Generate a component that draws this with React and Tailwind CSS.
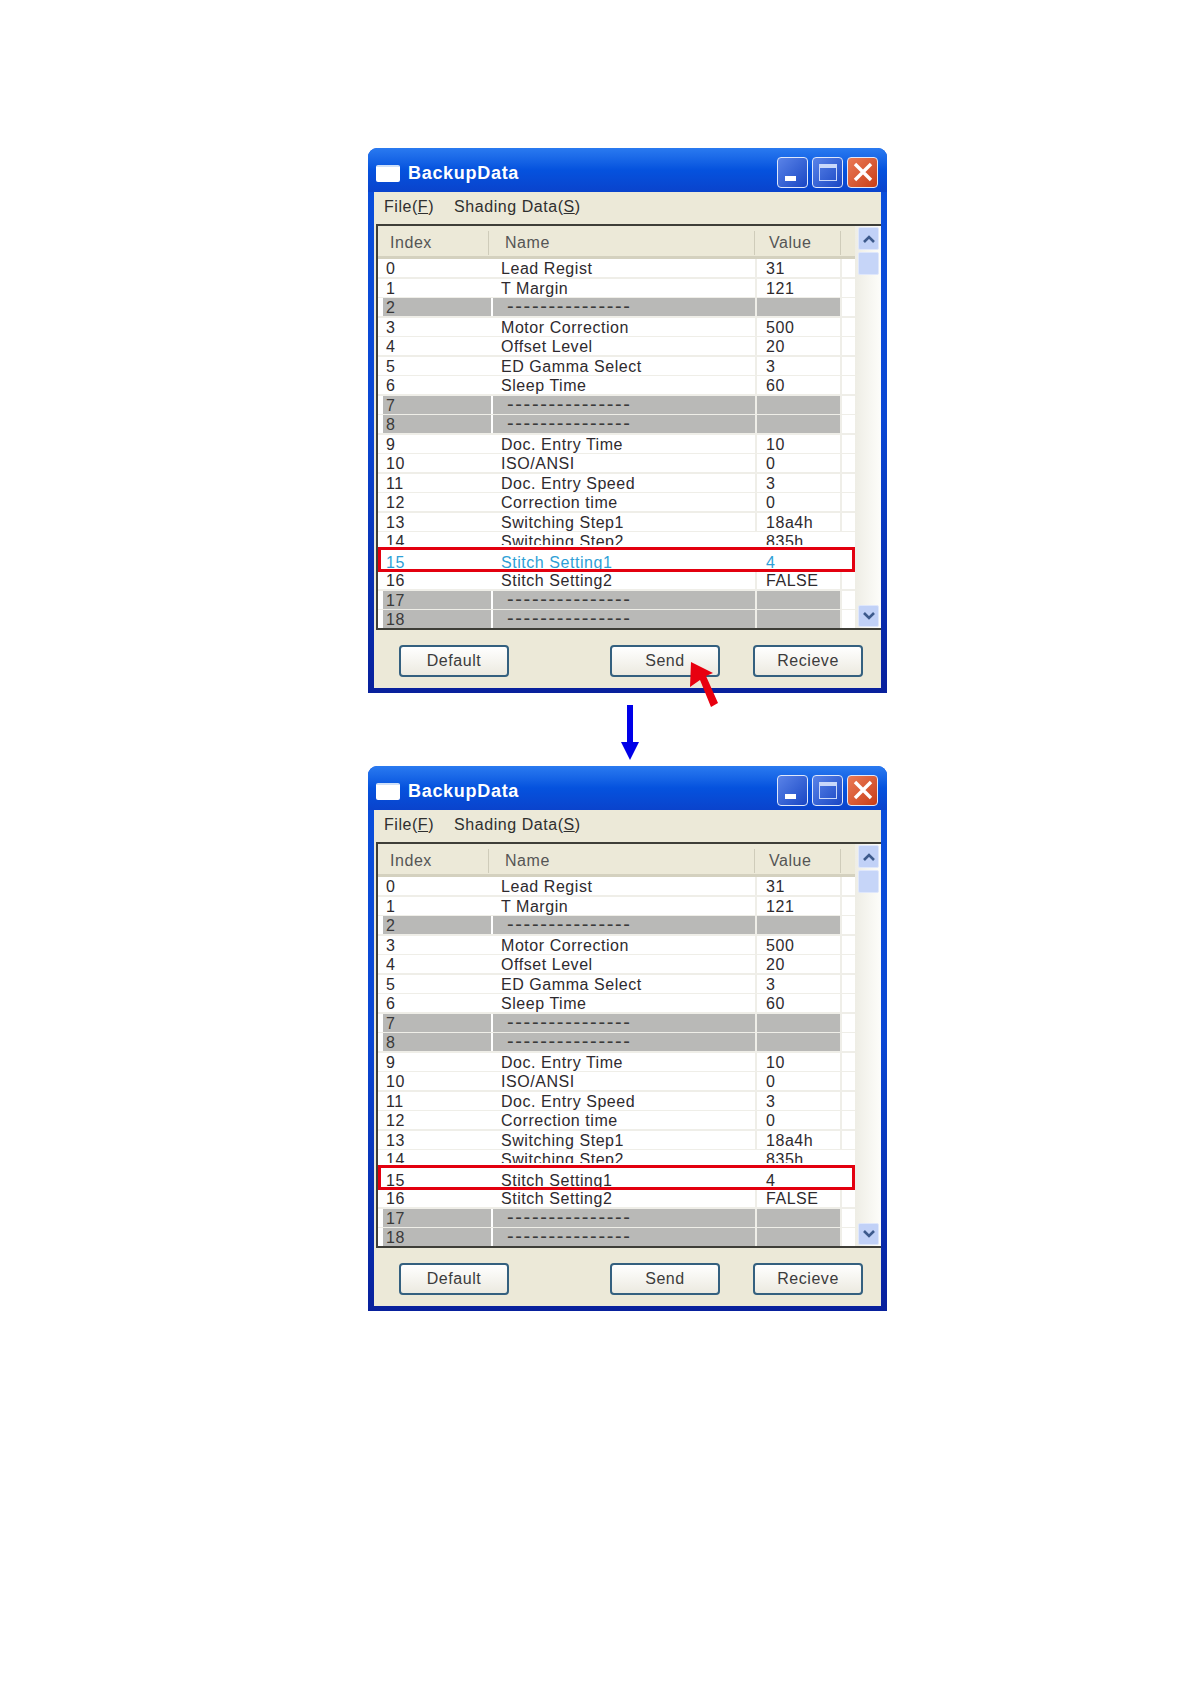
import React from 'react';

const rows = [
  ['0', 'Lead Regist', '31'],
  ['1', 'T Margin', '121'],
  ['2'],
  ['3', 'Motor Correction', '500'],
  ['4', 'Offset Level', '20'],
  ['5', 'ED Gamma Select', '3'],
  ['6', 'Sleep Time', '60'],
  ['7'],
  ['8'],
  ['9', 'Doc. Entry Time', '10'],
  ['10', 'ISO/ANSI', '0'],
  ['11', 'Doc. Entry Speed', '3'],
  ['12', 'Correction time', '0'],
  ['13', 'Switching Step1', '18a4h'],
  ['14', 'Switching Step2', '835h'],
  ['15', 'Stitch Setting1', '4'],
  ['16', 'Stitch Setting2', 'FALSE'],
  ['17'],
  ['18'],
];

const Row = ({ row, highlight }) => {
  const [index, name, value] = row;
  const blank = name === undefined;
  const cell = blank ? 'bg-[#b9b9b7]' : 'bg-white';
  const n = Number(index);
  // row 14 is cut off by row 15 in the original capture
  const height = n === 14 ? 'h-[15px] items-start' : n === 15 ? 'h-[24px] items-end' : 'h-[19.5px] items-stretch';
  const cellHeight = n === 14 ? 'h-[13px] overflow-hidden' : 'h-[18px]';
  const color = highlight ? 'text-[#2f9fd6]' : blank ? 'text-[#3a3a3a]' : 'text-[#2e2a2e]';

  return (
    <div className={`relative flex ${n === 14 || n === 15 ? 'bg-white' : 'bg-[#efeee8]'} ${height} ${color}`}>
      <div className={`flex w-[115px] shrink-0 bg-white leading-[20px] ${cellHeight}`}>
        <div className={`ml-[5px] h-[18px] w-[108px] pl-[3px] ${cell}`}>{index}</div>
      </div>
      <div className={`w-[262px] shrink-0 leading-[20px] pl-[8px] ${cellHeight} ${cell}`}>
        {blank ? <span className="ml-[6px] text-[20px] leading-[16px] tracking-[1.65px]">---------------</span> : name}
      </div>
      <div className={`ml-[2px] w-[83px] shrink-0 leading-[20px] pl-[9px] ${cellHeight} ${cell}`}>{value}</div>
      <div className={`ml-[2px] w-[13px] shrink-0 bg-white ${cellHeight}`} />
    </div>
  );
};

const Chevron = ({ up }) => (
  <svg viewBox="0 0 14 10" className="h-[10px] w-[14px]">
    <path d={up ? 'M2 8 L7 3 L12 8' : 'M2 2 L7 7 L12 2'} fill="none" stroke="#3d5a8c" strokeWidth="2.6" />
  </svg>
);

const CapButton = ({ children, close }) => (
  <div
    className={`flex h-[31px] w-[31px] items-center justify-center rounded-[4px] border border-[#dfe8fb] ${
      close ? 'bg-gradient-to-br from-[#ea7a55] to-[#c93c12]' : 'bg-gradient-to-br from-[#5a83e8] to-[#1a46c4]'
    }`}
  >
    {children}
  </div>
);

const PushButton = ({ children, className }) => (
  <div
    className={`flex h-[32px] w-[110px] items-center justify-center rounded-[4px] border-2 border-[#34607f] bg-gradient-to-b from-white to-[#eceae0] text-[16px] text-[#3c3c3c] ${className}`}
  >
    {children}
  </div>
);

const BackupWindow = ({ activeRow, children }) => (
  <div className="relative flex h-[545px] w-[519px] flex-col rounded-t-[9px] bg-gradient-to-b from-[#0a4fdc] via-[#0a47d4] to-[#08209c] pl-[6px] pr-[6px] pb-[5px] font-['Liberation_Sans',sans-serif] tracking-[0.55px] text-[16px]">
    {/* Title bar */}
    <div className="-ml-[6px] -mr-[6px] flex h-[44px] shrink-0 items-center rounded-t-[9px] bg-gradient-to-b from-[#2a7af0] via-[#0552de] to-[#0a43cc] pl-[8px] pr-[9px] pt-[6px]">
      <div className="h-[17px] w-[24px] rounded-[2px] border-t-2 border-[#cfe0f8] bg-white" />
      <span className="ml-[8px] text-[18px] font-bold tracking-[0.7px] text-white">BackupData</span>
      <div className="ml-auto -mt-[2px] flex gap-[4px]">
        <CapButton>
          <div className="mt-[13px] mr-[5px] h-[5px] w-[11px] bg-white" />
        </CapButton>
        <CapButton>
          <div className="h-[17px] w-[18px] border-[1.5px] border-t-[4px] border-[#c9d8fa]" />
        </CapButton>
        <CapButton close>
          <svg viewBox="0 0 20 20" className="h-[20px] w-[20px]">
            <path d="M2 2 L18 18 M18 2 L2 18" stroke="#fff" strokeWidth="3.4" />
          </svg>
        </CapButton>
      </div>
    </div>

    <div className="flex min-h-0 flex-1 flex-col bg-[#ece9d8]">
      {/* Menu */}
      <div className="flex h-[32px] shrink-0 items-center gap-[20px] pb-[2px] pl-[10px] text-[#2f2f2f]">
        <span>File(<span className="underline">F</span>)</span>
        <span>Shading Data(<span className="underline">S</span>)</span>
      </div>

      {/* Table */}
      <div className="ml-[2px] flex h-[406px] shrink-0 border-y-2 border-l-2 border-y-[#3e3e38] border-l-[#3e3e38] bg-white">
        <div className="w-[477px] shrink-0">
          <div className="flex h-[33px] items-center border-b-[3px] border-[#d4d1bf] bg-[#ece9d8] pt-[4px] text-[#555]">
            <div className="w-[110px] pl-[12px]">Index</div>
            <div className="h-[24px] w-px bg-[#cfccba]" />
            <div className="w-[265px] pl-[16px]">Name</div>
            <div className="h-[24px] w-px bg-[#cfccba]" />
            <div className="w-[85px] pl-[14px]">Value</div>
            <div className="h-[24px] w-px bg-[#cfccba]" />
          </div>
          <div className="h-[369px] overflow-hidden">
            {rows.map((row) => (
              <Row key={row[0]} row={row} highlight={activeRow === row[0]} />
            ))}
          </div>
        </div>

        {/* Scrollbar */}
        <div className="flex flex-1 flex-col bg-gradient-to-r from-[#eeede5] to-[#fdfdfa] pl-[3px] pr-px pt-px">
          <div className="flex h-[23px] w-[21px] items-center justify-center rounded-[2px] border border-[#dfe7fb] bg-[#c1d1f7]">
            <Chevron up />
          </div>
          <div className="mt-[2px] h-[23px] w-[21px] rounded-[2px] border border-[#dfe7fb] bg-[#c6d5f8]" />
          <div className="mt-auto mb-px flex h-[22px] w-[21px] items-center justify-center rounded-[2px] border border-[#dfe7fb] bg-[#c1d1f7]">
            <Chevron />
          </div>
        </div>
      </div>

      {/* Buttons */}
      <div className="flex flex-1 items-start pt-[15px] pl-[25px]">
        <PushButton>Default</PushButton>
        <PushButton className="ml-[101px]">Send</PushButton>
        <PushButton className="ml-[33px]">Recieve</PushButton>
      </div>
    </div>

    {/* Red outline around the edited row */}
    <div className="absolute left-[10px] top-[399px] h-[25px] w-[477px] border-[3px] border-[#e3000f]" />
    {children}
  </div>
);

export default function App() {
  return (
    <div className="min-h-[1684px] bg-white pl-[368px] pt-[148px]">
      <BackupWindow activeRow="15">
        <svg viewBox="0 0 34 50" className="absolute left-[320px] top-[512px] h-[50px] w-[34px]">
          <path d="M3 2 L25 13 L18 16 L30 43 L23 47 L12 20 L2 27 Z" fill="#e8000f" />
        </svg>
      </BackupWindow>
      <div className="flex h-[73px] w-[519px] pl-[252px] pt-[12px]">
        <svg viewBox="0 0 20 56" className="h-[56px] w-[20px]">
          <path d="M7 0 H13 V37 H19 L10 55 L1 37 H7 Z" fill="#0000e8" />
        </svg>
      </div>
      <BackupWindow />
    </div>
  );
}
